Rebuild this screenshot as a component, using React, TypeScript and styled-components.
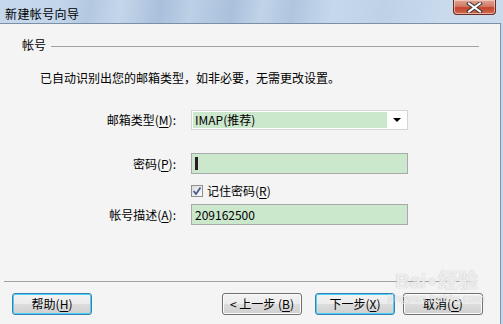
import React from 'react';
import styled, { createGlobalStyle } from 'styled-components';

const GlobalStyle = createGlobalStyle`
    html, body {
        margin: 0;
        padding: 0;
        background: #f4f4f4;
    }
    * {
        box-sizing: border-box;
    }
`;

function App() {
    return (
        <Window>
            <GlobalStyle />
            <TitleBar>
                <TitleText>新建帐号向导</TitleText>
                <CloseButton>
                    <svg width="17" height="11" viewBox="0 0 17 11">
                        <path d="M3 1.5 L14 9.5 M14 1.5 L3 9.5" stroke="#3a3a3a" strokeWidth="4" strokeLinecap="square" />
                        <path d="M3 1.5 L14 9.5 M14 1.5 L3 9.5" stroke="#ffffff" strokeWidth="2" strokeLinecap="square" />
                    </svg>
                </CloseButton>
            </TitleBar>

            <Body>
                <GroupHeader>
                    <span>帐号</span>
                    <GroupLine />
                </GroupHeader>

                <Hint>已自动识别出您的邮箱类型，如非必要，无需更改设置。</Hint>

                <Form>
                    <Label $top={0}>邮箱类型(<u>M</u>):</Label>
                    <Combo $top={0}>
                        <ComboValue>IMAP(推荐)</ComboValue>
                        <ComboArrow />
                    </Combo>

                    <Label $top={23}>密码(<u>P</u>):</Label>
                    <Field $top={23}>
                        <Caret />
                    </Field>

                    <span />
                    <CheckRow>
                        <CheckBox>
                            <svg width="10" height="10" viewBox="0 0 10 10">
                                <path d="M1.5 5 L4 8 L8.5 1.5" fill="none" stroke="#4a5c96" strokeWidth="1.8" />
                            </svg>
                        </CheckBox>
                        <span>记住密码(<u>R</u>)</span>
                    </CheckRow>

                    <Label $top={5}>帐号描述(<u>A</u>):</Label>
                    <Field $top={5}>209162500</Field>
                </Form>

                <Footer>
                    <Separator />
                    <ButtonRow>
                        <Button $primary>帮助(<u>H</u>)</Button>
                        <Spacer />
                        <Button>&lt; 上一步 (<u>B</u>)</Button>
                        <Button $primary>下一步(<u>X</u>)</Button>
                        <Button>取消(<u>C</u>)</Button>
                    </ButtonRow>
                </Footer>

                <Watermark>
                    <WmBig>Bai<Paw>●</Paw>经验</WmBig>
                    <WmSmall>jingyan.baidu.com</WmSmall>
                </Watermark>
            </Body>
        </Window>
    );
}

export default App;

const Window = styled.div`
    width: 503px;
    height: 324px;
    display: flex;
    flex-direction: column;
    overflow: hidden;
    background: #c4d6ea;
    font-family: "Noto Sans CJK SC", "Liberation Sans", sans-serif;
    font-size: 12px;
    color: #000;

    u {
        text-decoration: underline;
        text-underline-offset: 2px;
    }
`;

const TitleBar = styled.div`
    height: 23px;
    flex: none;
    display: flex;
    align-items: flex-start;
    justify-content: space-between;
    padding-left: 5px;
    padding-right: 7px;
    background:
        linear-gradient(100deg,
            #c6d8ec 0%, #c2d5ea 12%, #b4c8e0 18%, #c4d6ea 24%,
            #a9c0dc 32%, #bcd0e6 38%, #aac1dc 46%, #c0d3e8 52%,
            #b0c6df 58%, #c6d8eb 66%, #bed1e7 76%, #c9daed 88%, #cbdbee 100%);
`;

const TitleText = styled.div`
    font-size: 12px;
    line-height: 23px;
    padding-top: 2px;
    color: #000;
    letter-spacing: 0.4px;
`;

const CloseButton = styled.div`
    width: 43px;
    height: 15px;
    margin-top: 0;
    display: flex;
    align-items: center;
    justify-content: center;
    border: 1px solid #6b2a22;
    border-top: none;
    border-radius: 0 0 4px 4px;
    background: linear-gradient(#e0a596 0%, #d27a66 45%, #c4432c 55%, #cf6a50 100%);
    box-shadow: inset 0 0 0 1px rgba(255, 220, 210, 0.6);
`;

const Body = styled.div`
    position: relative;
    flex: 1;
    margin-right: 2px;
    background: #f4f4f4;
    border-top: 1px solid #7b8fa5;
    border-right: 1px solid #7f95ad;
    display: flex;
    flex-direction: column;
`;

const GroupHeader = styled.div`
    margin-top: 13px;
    margin-left: 22px;
    margin-right: 21px;
    height: 16px;
    display: flex;
    align-items: center;
    gap: 5px;
    line-height: 16px;
`;

const GroupLine = styled.div`
    flex: 1;
    height: 1px;
    margin-top: 3px;
    background: #a0a0a0;
`;

const Hint = styled.div`
    margin-top: 17px;
    margin-left: 40px;
    line-height: 16px;
`;

const Form = styled.div`
    margin-top: 24px;
    display: grid;
    grid-template-columns: 176px 217px;
    column-gap: 15px;
    align-items: center;
`;

const Label = styled.div<{ $top: number }>`
    margin-top: ${p => p.$top}px;
    text-align: right;
    line-height: 16px;
`;

const Combo = styled.div<{ $top: number }>`
    margin-top: ${p => p.$top}px;
    height: 20px;
    display: flex;
    align-items: stretch;
    padding: 1px;
    border: 1px solid #d6d6d6;
    background: #fff;
`;

const ComboValue = styled.div`
    flex: 1;
    background: #cce8cc;
    padding-left: 2px;
    line-height: 16px;
`;

const ComboArrow = styled.div`
    width: 19px;
    position: relative;

    &::after {
        content: "";
        position: absolute;
        left: 6px;
        top: 6px;
        border-left: 4px solid transparent;
        border-right: 4px solid transparent;
        border-top: 4px solid #000;
    }
`;

const Field = styled.div<{ $top: number }>`
    margin-top: ${p => p.$top}px;
    height: 21px;
    display: flex;
    align-items: center;
    padding-left: 3px;
    border: 1px solid #a9a9a9;
    background: #cce8cc;
    line-height: 16px;
`;

const Caret = styled.div`
    width: 3px;
    height: 13px;
    background: #2a1a2a;
`;

const CheckRow = styled.div`
    margin-top: 9px;
    display: flex;
    align-items: center;
    gap: 4px;
    line-height: 16px;
`;

const CheckBox = styled.div`
    width: 12px;
    height: 12px;
    display: flex;
    align-items: center;
    justify-content: center;
    border: 1px solid #8e8f8f;
    background: linear-gradient(135deg, #dcdcdc, #fbfbfb);
`;

const Footer = styled.div`
    margin-top: auto;
    padding-bottom: 9px;
`;

const Separator = styled.div`
    height: 1px;
    margin-left: 4px;
    width: 466px;
    background: #a0a0a0;
`;

const ButtonRow = styled.div`
    margin-top: 11px;
    padding-left: 12px;
    display: flex;
    gap: 0;

    & > button:nth-child(4) {
        margin-left: 13px;
    }
    & > button:nth-child(5) {
        margin-left: 8px;
    }
`;

const Spacer = styled.div`
    width: 130px;
`;

const Button = styled.button<{ $primary?: boolean }>`
    width: 80px;
    height: 22px;
    padding: 0;
    font-family: inherit;
    font-size: 12px;
    color: #000;
    line-height: 16px;
    border-radius: 3px;
    border: 1px solid ${p => (p.$primary ? '#3c7fb1' : '#707070')};
    background: linear-gradient(#f3f3f3 0%, #ebebeb 50%, #dddddd 51%, #cfcfcf 100%);
    box-shadow: inset 0 0 0 1px ${p => (p.$primary ? '#48d2f8' : '#fbfbfb')};
`;

const Watermark = styled.div`
    position: absolute;
    left: 388px;
    top: 246px;
    display: flex;
    flex-direction: column;
    align-items: center;
    pointer-events: none;
    color: rgba(255, 255, 255, 0.75);
    text-shadow: 0 0 1px rgba(150, 150, 150, 0.7);
    font-family: "Liberation Sans", "Noto Sans CJK SC", sans-serif;
`;

const WmBig = styled.div`
    font-size: 20px;
    font-weight: bold;
    line-height: 22px;
    display: flex;
    align-items: center;
`;

const Paw = styled.span`
    font-size: 16px;
    margin: 0 1px;
`;

const WmSmall = styled.div`
    font-size: 11px;
    line-height: 12px;
    letter-spacing: 0.5px;
`;
